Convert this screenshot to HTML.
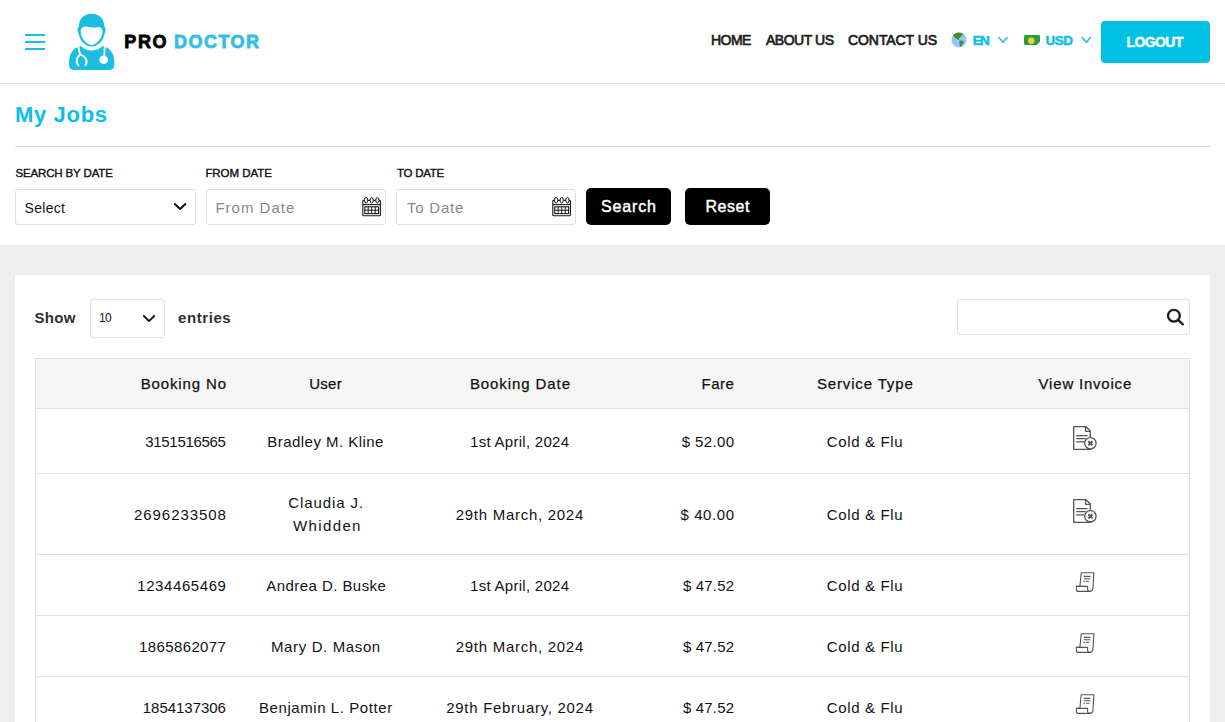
<!DOCTYPE html>
<html lang="en">
<head>
<meta charset="utf-8">
<title>My Jobs - Pro Doctor</title>
<style>
*{box-sizing:border-box;margin:0;padding:0}
html,body{width:1225px;height:722px;overflow:hidden;background:#fff}
body{font-family:"Liberation Sans",sans-serif;color:#1c1c1c;position:relative}
.t{position:absolute;white-space:nowrap;line-height:1}
.bx{position:absolute;border:1px solid #e0e0e0;border-radius:3px;background:#fff}
.btn{position:absolute;background:#000;border-radius:5px}
.ln{position:absolute;height:1px;background:#e0e0e0}
svg{position:absolute;overflow:visible}
#header{position:absolute;left:0;top:0;width:1225px;height:84px;background:#fff;border-bottom:1px solid #dcdcdc}
#grey{position:absolute;left:0;top:245px;width:1225px;height:477px;background:#eeeeee}
#card{position:absolute;left:15px;top:275px;width:1195px;height:447px;background:#fff}
#tbl{position:absolute;left:35px;top:358px;width:1155px;height:370px;border:1px solid #e0e0e0;background:#fff}
#thead{position:absolute;left:36px;top:359px;width:1153px;height:49px;background:#f6f6f6}
#logout{position:absolute;left:1101px;top:21px;width:109px;height:42px;background:#00c0e6;border-radius:4px}
</style>
</head>
<body>
<div id="header"></div>
<div style="position:absolute;left:25px;top:34px;width:20px;height:2px;background:#1bbde0"></div>
<div style="position:absolute;left:25px;top:41px;width:20px;height:2px;background:#1bbde0"></div>
<div style="position:absolute;left:25px;top:48px;width:20px;height:2px;background:#1bbde0"></div>
<svg style="left:60px;top:5px" width="65" height="75" viewBox="0 0 65 75">
<path d="M31.6 8.8 C39.5 8.8 44.2 14 44.2 21.3 C46 22 46 27.4 44.2 29.5 C43.6 35.5 38 41.6 31.6 41.6 C25.2 41.6 19.6 35.5 19 29.5 C17.2 27.4 17.2 22 19 21.3 C19 14 23.7 8.8 31.6 8.8 Z" fill="#1bbde0"/>
<path d="M20.7 26.5 C20.5 24 22.5 21.6 26 21.6 C30 22.8 35 22.8 38.5 22 C41.5 22.2 42.7 24.5 42.5 26.5 C42.5 32 37.5 39.9 31.6 39.9 C25.7 39.9 20.7 32 20.7 26.5 Z" fill="#fff"/>
<path d="M20.6 41 C23.5 44.2 28 45.6 31.6 45.6 C35.2 45.6 39.7 44.2 42.6 41 C50 43 54.3 48 54.3 57 L54.3 60.2 C54.3 63 52.4 64.9 49.6 64.9 L13.8 64.9 C11 64.9 9.1 63 9.1 60.2 L9.1 57 C9.1 48 13.4 43 20.6 41 Z" fill="#1bbde0"/>
<path d="M18.4 41.6 C18.7 45 19.4 47.6 20.6 49.6 C16.6 51.5 15.2 57.5 18.6 60.4 M20.6 49.6 C25.4 51 28.4 56.5 25.4 60.2" fill="none" stroke="#fff" stroke-width="1.9" stroke-linecap="round"/>
<path d="M44.7 41.6 L44.2 51" fill="none" stroke="#fff" stroke-width="1.7"/>
<circle cx="43.7" cy="54.7" r="4.3" fill="#fff"/>
</svg>
<svg style="left:951px;top:32px" width="16" height="16" viewBox="0 0 16 16">
<circle cx="8" cy="7.9" r="7.5" fill="#8fc9f6"/>
<path d="M2.2 3.2 C3.6 1.4 6 0.5 8.4 0.5 C10 0.6 11.2 1.2 12 1.8 C11 2.6 11.6 3.6 10.4 4 C9.4 4.4 9.4 5.4 8.6 5.8 C8 6.2 7.6 7.2 8.2 7.8 C7.4 8.2 6.6 7.6 6 6.8 C5.2 6 4.2 6.2 3.6 5.4 C3.2 4.6 2.6 4.2 2.2 3.2 Z" fill="#4b8b2b"/>
<path d="M8.6 8.8 C9.8 8.2 11.6 8.6 12.6 9.6 C13 10.6 12.2 11.6 11.4 12.4 C10.6 13.2 10.2 14.4 9 15 C8.6 13.8 8.8 12.6 8.6 11.6 C8.2 10.6 8 9.6 8.6 8.8 Z" fill="#4b8b2b"/>
</svg>
<svg style="left:1024px;top:35px" width="16" height="10" viewBox="0 0 16 10">
<path d="M1.6 0 H14.6 Q16 0 16 1.4 V6.6 L12.8 10 H1.6 Q0 10 0 8.6 V1.4 Q0 0 1.6 0 Z" fill="#2a9d3e"/>
<circle cx="7.3" cy="5.7" r="3.2" fill="#f6d23c"/>
</svg>
<svg style="left:0;top:0" width="1225" height="722"><path d="M998.8 37.6 L1003.0 42.2 L1007.2 37.6" fill="none" stroke="#1bbde0" stroke-width="1.5" stroke-linecap="round" stroke-linejoin="round"/></svg>
<svg style="left:0;top:0" width="1225" height="722"><path d="M1082.2 37.6 L1086.4 42.2 L1090.6 37.6" fill="none" stroke="#1bbde0" stroke-width="1.5" stroke-linecap="round" stroke-linejoin="round"/></svg>
<div id="logout"></div>
<div class="ln" style="left:15px;top:146px;width:1195px;background:#dadada"></div>
<div class="bx" style="left:15px;top:189px;width:181px;height:36px"></div>
<div class="bx" style="left:206px;top:189px;width:180px;height:36px"></div>
<div class="bx" style="left:396px;top:189px;width:180px;height:36px"></div>
<svg style="left:0;top:0" width="1225" height="722"><path d="M174.8 204 L180.10000000000002 209 L185.4 204" fill="none" stroke="#111" stroke-width="2" stroke-linecap="round" stroke-linejoin="round"/></svg>
<svg style="left:361.6px;top:196.6px" width="20" height="20" viewBox="0 0 20 20" fill="none" stroke="#1a1a1a">
<path d="M0.8 4.2 Q0.8 3.4 1.6 3.4 H17.6 Q18.4 3.4 18.4 4.2 V18 Q18.4 18.8 17.6 18.8 H1.6 Q0.8 18.8 0.8 18 Z" stroke-width="1.1"/>
<path d="M0.8 7.6 H18.4" stroke-width="1.1"/>
<ellipse cx="4.1" cy="3.2" rx="1.6" ry="2.8" stroke-width="1" fill="#fff"/>
<ellipse cx="9.7" cy="3.2" rx="1.6" ry="2.8" stroke-width="1" fill="#fff"/>
<ellipse cx="15.4" cy="3.2" rx="1.6" ry="2.8" stroke-width="1" fill="#fff"/>
<rect x="2.8" y="9.8" width="13.8" height="6.8" stroke-width="1.1"/>
<path d="M6.2 9.8 V16.6 M9.7 9.8 V16.6 M13.2 9.8 V16.6 M2.8 13.2 H16.6" stroke-width="1"/>
</svg>
<svg style="left:551.6px;top:196.6px" width="20" height="20" viewBox="0 0 20 20" fill="none" stroke="#1a1a1a">
<path d="M0.8 4.2 Q0.8 3.4 1.6 3.4 H17.6 Q18.4 3.4 18.4 4.2 V18 Q18.4 18.8 17.6 18.8 H1.6 Q0.8 18.8 0.8 18 Z" stroke-width="1.1"/>
<path d="M0.8 7.6 H18.4" stroke-width="1.1"/>
<ellipse cx="4.1" cy="3.2" rx="1.6" ry="2.8" stroke-width="1" fill="#fff"/>
<ellipse cx="9.7" cy="3.2" rx="1.6" ry="2.8" stroke-width="1" fill="#fff"/>
<ellipse cx="15.4" cy="3.2" rx="1.6" ry="2.8" stroke-width="1" fill="#fff"/>
<rect x="2.8" y="9.8" width="13.8" height="6.8" stroke-width="1.1"/>
<path d="M6.2 9.8 V16.6 M9.7 9.8 V16.6 M13.2 9.8 V16.6 M2.8 13.2 H16.6" stroke-width="1"/>
</svg>
<div class="btn" style="left:586px;top:188px;width:85px;height:37px"></div>
<div class="btn" style="left:685px;top:188px;width:85px;height:37px"></div>
<div id="grey"></div><div id="card"></div>
<div class="bx" style="left:90px;top:299px;width:75px;height:39px"></div>
<svg style="left:0;top:0" width="1225" height="722"><path d="M143.8 315.8 L149.05 321.1 L154.3 315.8" fill="none" stroke="#111" stroke-width="1.9" stroke-linecap="round" stroke-linejoin="round"/></svg>
<div class="bx" style="left:957px;top:299px;width:233px;height:36px"></div>
<svg style="left:1160px;top:303px" width="30" height="30" viewBox="0 0 30 30" fill="none" stroke="#1a1a1a" stroke-width="2.3" stroke-linecap="round">
<circle cx="13.9" cy="12.7" r="5.9"/>
<path d="M18.3 17.1 L22.8 21.4"/>
</svg>
<div id="tbl"></div><div id="thead"></div>
<div class="ln" style="left:36px;top:408px;width:1153px"></div>
<div class="ln" style="left:36px;top:473px;width:1153px"></div>
<div class="ln" style="left:36px;top:554px;width:1153px"></div>
<div class="ln" style="left:36px;top:615px;width:1153px"></div>
<div class="ln" style="left:36px;top:676px;width:1153px"></div>
<svg style="left:1073.15px;top:426.4px" width="26" height="26" viewBox="0 0 26 26" fill="none" stroke="#555" stroke-width="1.3" stroke-linejoin="round">
<path d="M0.7 0.7 H13 L17.3 5 V23.3 H0.7 Z" fill="#fff"/>
<path d="M12.6 0.9 V5.3 H17"/>
<path d="M3.2 9.6 H14.6 M3.2 12.7 H12.8 M3.2 15.8 H11"/>
<circle cx="17.4" cy="17.3" r="5.7" fill="#fff"/>
<path d="M15.3 15.2 L19.5 19.4 M19.5 15.2 L15.3 19.4" stroke-width="2"/>
</svg>
<svg style="left:1073.15px;top:499.4px" width="26" height="26" viewBox="0 0 26 26" fill="none" stroke="#555" stroke-width="1.3" stroke-linejoin="round">
<path d="M0.7 0.7 H13 L17.3 5 V23.3 H0.7 Z" fill="#fff"/>
<path d="M12.6 0.9 V5.3 H17"/>
<path d="M3.2 9.6 H14.6 M3.2 12.7 H12.8 M3.2 15.8 H11"/>
<circle cx="17.4" cy="17.3" r="5.7" fill="#fff"/>
<path d="M15.3 15.2 L19.5 19.4 M19.5 15.2 L15.3 19.4" stroke-width="2"/>
</svg>
<svg style="left:1074.6px;top:571px" width="21" height="22" viewBox="0 0 21 22" fill="none" stroke="#555" stroke-width="1.1" stroke-linejoin="round" stroke-linecap="round">
<path d="M6.2 1.7 H18.9 L17.9 17.8 Q17.7 20.4 14.8 20.4 H3.4 Q1.4 20.4 1.4 18.4 V15.4 H4.9 Z" fill="#fff"/>
<path d="M1.4 15.4 H12.6 V18.6 Q12.7 20.3 14.8 20.4"/>
<path d="M9.2 5.4 H15 M9.2 7.7 H15 M8.8 10.3 H9.6 M11.4 10.3 H14" stroke-width="1.1"/>
</svg>
<svg style="left:1074.6px;top:632px" width="21" height="22" viewBox="0 0 21 22" fill="none" stroke="#555" stroke-width="1.1" stroke-linejoin="round" stroke-linecap="round">
<path d="M6.2 1.7 H18.9 L17.9 17.8 Q17.7 20.4 14.8 20.4 H3.4 Q1.4 20.4 1.4 18.4 V15.4 H4.9 Z" fill="#fff"/>
<path d="M1.4 15.4 H12.6 V18.6 Q12.7 20.3 14.8 20.4"/>
<path d="M9.2 5.4 H15 M9.2 7.7 H15 M8.8 10.3 H9.6 M11.4 10.3 H14" stroke-width="1.1"/>
</svg>
<svg style="left:1074.6px;top:693px" width="21" height="22" viewBox="0 0 21 22" fill="none" stroke="#555" stroke-width="1.1" stroke-linejoin="round" stroke-linecap="round">
<path d="M6.2 1.7 H18.9 L17.9 17.8 Q17.7 20.4 14.8 20.4 H3.4 Q1.4 20.4 1.4 18.4 V15.4 H4.9 Z" fill="#fff"/>
<path d="M1.4 15.4 H12.6 V18.6 Q12.7 20.3 14.8 20.4"/>
<path d="M9.2 5.4 H15 M9.2 7.7 H15 M8.8 10.3 H9.6 M11.4 10.3 H14" stroke-width="1.1"/>
</svg>
<div class="t" id="logo-pro" style="left:124.3px;top:33px;font-size:18px;font-weight:bold;color:#000;letter-spacing:1.650px;-webkit-text-stroke:0.8px #000;">PRO</div>
<div class="t" id="logo-doc" style="left:173.9px;top:33px;font-size:18px;font-weight:bold;color:#35bde3;letter-spacing:1.500px;-webkit-text-stroke:0.8px #35bde3;">DOCTOR</div>
<div class="t" id="n1" style="left:711.0px;top:33px;font-size:14px;font-weight:normal;color:#222;letter-spacing:-0.533px;-webkit-text-stroke:0.7px #222;">HOME</div>
<div class="t" id="n2" style="left:765.9px;top:33px;font-size:14px;font-weight:normal;color:#222;letter-spacing:-0.457px;-webkit-text-stroke:0.7px #222;">ABOUT US</div>
<div class="t" id="n3" style="left:848.0px;top:33px;font-size:14px;font-weight:normal;color:#222;letter-spacing:-0.078px;-webkit-text-stroke:0.7px #222;">CONTACT US</div>
<div class="t" id="n4" style="left:972.8px;top:34px;font-size:13.5px;font-weight:bold;color:#0cbfe8;letter-spacing:-1.800px;-webkit-text-stroke:0.5px #0cbfe8;">EN</div>
<div class="t" id="n5" style="left:1045.6px;top:34px;font-size:13.5px;font-weight:bold;color:#0cbfe8;letter-spacing:-0.600px;-webkit-text-stroke:0.5px #0cbfe8;">USD</div>
<div class="t" id="n6" style="left:1126.4px;top:35px;font-size:14px;font-weight:bold;color:#fff;letter-spacing:-0.560px;-webkit-text-stroke:0.4px #fff;">LOGOUT</div>
<div class="t" id="title" style="left:14.9px;top:104px;font-size:22px;font-weight:bold;color:#0cbfe8;letter-spacing:0.683px;">My Jobs</div>
<div class="t" id="l1" style="left:15.4px;top:168px;font-size:11.5px;font-weight:normal;color:#121212;letter-spacing:-0.138px;-webkit-text-stroke:0.4px #121212;">SEARCH BY DATE</div>
<div class="t" id="l2" style="left:205.4px;top:168px;font-size:11.5px;font-weight:normal;color:#121212;letter-spacing:-0.050px;-webkit-text-stroke:0.4px #121212;">FROM DATE</div>
<div class="t" id="l3" style="left:397.0px;top:168px;font-size:11.5px;font-weight:normal;color:#121212;letter-spacing:-0.267px;-webkit-text-stroke:0.4px #121212;">TO DATE</div>
<div class="t" id="sel" style="left:24.6px;top:201px;font-size:14px;font-weight:normal;color:#121212;letter-spacing:0.280px;">Select</div>
<div class="t" id="fd" style="left:215.4px;top:200px;font-size:15px;font-weight:normal;color:#8a8a8a;letter-spacing:1.000px;">From Date</div>
<div class="t" id="td" style="left:407.0px;top:200px;font-size:15px;font-weight:normal;color:#8a8a8a;letter-spacing:0.767px;">To Date</div>
<div class="t" id="b1" style="left:601.0px;top:199px;font-size:16px;font-weight:normal;color:#fff;letter-spacing:0.840px;-webkit-text-stroke:0.45px #fff;">Search</div>
<div class="t" id="b2" style="left:705.4px;top:199px;font-size:16px;font-weight:normal;color:#fff;letter-spacing:0.550px;-webkit-text-stroke:0.45px #fff;">Reset</div>
<div class="t" id="show" style="left:34.4px;top:310px;font-size:15px;font-weight:bold;color:#2e2e38;letter-spacing:0.333px;">Show</div>
<div class="t" id="ten" style="left:99.0px;top:312px;font-size:12px;font-weight:normal;color:#121212;letter-spacing:-0.600px;">10</div>
<div class="t" id="entries" style="left:178.0px;top:310px;font-size:15px;font-weight:bold;color:#2e2e38;letter-spacing:0.583px;">entries</div>
<div class="t" id="h1" style="left:140.7px;top:376px;font-size:15px;font-weight:normal;color:#111;letter-spacing:0.867px;-webkit-text-stroke:0.25px #111;">Booking No</div>
<div class="t" id="h2" style="left:309.3px;top:376px;font-size:15px;font-weight:normal;color:#111;letter-spacing:0.233px;-webkit-text-stroke:0.25px #111;">User</div>
<div class="t" id="h3" style="left:469.9px;top:376px;font-size:15px;font-weight:normal;color:#111;letter-spacing:0.918px;-webkit-text-stroke:0.25px #111;">Booking Date</div>
<div class="t" id="h4" style="left:701.6px;top:376px;font-size:15px;font-weight:normal;color:#111;letter-spacing:0.467px;-webkit-text-stroke:0.25px #111;">Fare</div>
<div class="t" id="h5" style="left:816.9px;top:376px;font-size:15px;font-weight:normal;color:#111;letter-spacing:0.855px;-webkit-text-stroke:0.25px #111;">Service Type</div>
<div class="t" id="h6" style="left:1038.6px;top:376px;font-size:15px;font-weight:normal;color:#111;letter-spacing:0.791px;-webkit-text-stroke:0.25px #111;">View Invoice</div>
<div class="t" id="r1a" style="left:145.25px;top:434px;font-size:15px;font-weight:normal;color:#121212;letter-spacing:-0.306px;">3151516565</div>
<div class="t" id="r1b0" style="left:267.25px;top:434px;font-size:15px;font-weight:normal;color:#121212;letter-spacing:0.467px;">Bradley M. Kline</div>
<div class="t" id="r1c" style="left:470.0px;top:434px;font-size:15px;font-weight:normal;color:#121212;letter-spacing:0.286px;">1st April, 2024</div>
<div class="t" id="r1d" style="left:681.75px;top:434px;font-size:15px;font-weight:normal;color:#121212;letter-spacing:0.375px;">$ 52.00</div>
<div class="t" id="r1e" style="left:826.75px;top:434px;font-size:15px;font-weight:normal;color:#121212;letter-spacing:0.639px;">Cold &amp; Flu</div>
<div class="t" id="r2a" style="left:134.0px;top:507px;font-size:15px;font-weight:normal;color:#121212;letter-spacing:0.944px;">2696233508</div>
<div class="t" id="r2b0" style="left:288.25px;top:495px;font-size:15px;font-weight:normal;color:#121212;letter-spacing:0.917px;">Claudia J.</div>
<div class="t" id="r2b1" style="left:293.0px;top:518px;font-size:15px;font-weight:normal;color:#121212;letter-spacing:1.375px;">Whidden</div>
<div class="t" id="r2c" style="left:455.75px;top:507px;font-size:15px;font-weight:normal;color:#121212;letter-spacing:0.717px;">29th March, 2024</div>
<div class="t" id="r2d" style="left:680.5px;top:507px;font-size:15px;font-weight:normal;color:#121212;letter-spacing:0.583px;">$ 40.00</div>
<div class="t" id="r2e" style="left:826.75px;top:507px;font-size:15px;font-weight:normal;color:#121212;letter-spacing:0.639px;">Cold &amp; Flu</div>
<div class="t" id="r3a" style="left:137.25px;top:578px;font-size:15px;font-weight:normal;color:#121212;letter-spacing:0.583px;">1234465469</div>
<div class="t" id="r3b0" style="left:266.25px;top:578px;font-size:15px;font-weight:normal;color:#121212;letter-spacing:0.446px;">Andrea D. Buske</div>
<div class="t" id="r3c" style="left:470.0px;top:578px;font-size:15px;font-weight:normal;color:#121212;letter-spacing:0.286px;">1st April, 2024</div>
<div class="t" id="r3d" style="left:683.0px;top:578px;font-size:15px;font-weight:normal;color:#121212;letter-spacing:0.167px;">$ 47.52</div>
<div class="t" id="r3e" style="left:826.75px;top:578px;font-size:15px;font-weight:normal;color:#121212;letter-spacing:0.639px;">Cold &amp; Flu</div>
<div class="t" id="r4a" style="left:139.0px;top:639px;font-size:15px;font-weight:normal;color:#121212;letter-spacing:0.389px;">1865862077</div>
<div class="t" id="r4b0" style="left:271.0px;top:639px;font-size:15px;font-weight:normal;color:#121212;letter-spacing:0.625px;">Mary D. Mason</div>
<div class="t" id="r4c" style="left:455.75px;top:639px;font-size:15px;font-weight:normal;color:#121212;letter-spacing:0.717px;">29th March, 2024</div>
<div class="t" id="r4d" style="left:683.0px;top:639px;font-size:15px;font-weight:normal;color:#121212;letter-spacing:0.167px;">$ 47.52</div>
<div class="t" id="r4e" style="left:826.75px;top:639px;font-size:15px;font-weight:normal;color:#121212;letter-spacing:0.639px;">Cold &amp; Flu</div>
<div class="t" id="r5a" style="left:142.75px;top:700px;font-size:15px;font-weight:normal;color:#121212;letter-spacing:-0.028px;">1854137306</div>
<div class="t" id="r5b0" style="left:259.0px;top:700px;font-size:15px;font-weight:normal;color:#121212;letter-spacing:0.574px;">Benjamin L. Potter</div>
<div class="t" id="r5c" style="left:446.25px;top:700px;font-size:15px;font-weight:normal;color:#121212;letter-spacing:0.708px;">29th February, 2024</div>
<div class="t" id="r5d" style="left:683.0px;top:700px;font-size:15px;font-weight:normal;color:#121212;letter-spacing:0.167px;">$ 47.52</div>
<div class="t" id="r5e" style="left:826.75px;top:700px;font-size:15px;font-weight:normal;color:#121212;letter-spacing:0.639px;">Cold &amp; Flu</div>
</body>
</html>
